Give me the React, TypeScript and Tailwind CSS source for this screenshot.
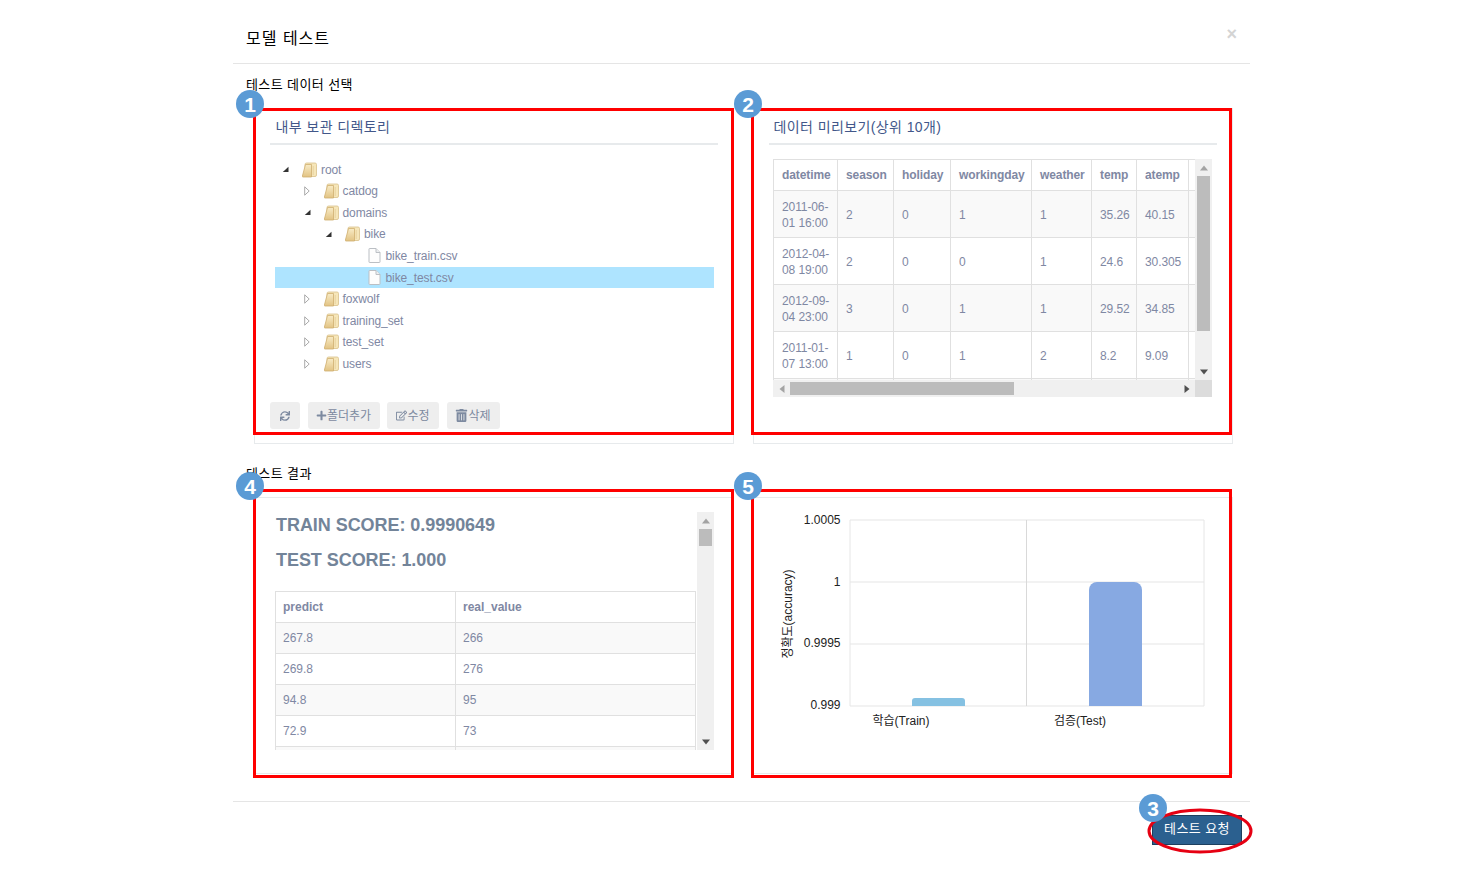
import { FaPlus, FaRegEdit, FaSync, FaTrashAlt } from 'react-icons/fa';

const FONT = "font-['Liberation_Sans','Noto_Sans_CJK_KR',sans-serif]";

const treeRows = [
  { name: 'root', depth: 0, open: true, kind: 'folder' },
  { name: 'catdog', depth: 1, open: false, kind: 'folder' },
  { name: 'domains', depth: 1, open: true, kind: 'folder' },
  { name: 'bike', depth: 2, open: true, kind: 'folder' },
  { name: 'bike_train.csv', depth: 3, kind: 'file' },
  { name: 'bike_test.csv', depth: 3, kind: 'file', selected: true },
  { name: 'foxwolf', depth: 1, open: false, kind: 'folder' },
  { name: 'training_set', depth: 1, open: false, kind: 'folder' },
  { name: 'test_set', depth: 1, open: false, kind: 'folder' },
  { name: 'users', depth: 1, open: false, kind: 'folder' },
];

const previewCols = [
  ['datetime', 'w-[64px]'],
  ['season', 'w-[56px]'],
  ['holiday', 'w-[57px]'],
  ['workingday', 'w-[81px]'],
  ['weather', 'w-[60px]'],
  ['temp', 'w-[45px]'],
  ['atemp', 'w-[52px]'],
  ['', 'w-[40px]'],
];

const previewRows = [
  ['2011-06-\n01 16:00', '2', '0', '1', '1', '35.26', '40.15', ''],
  ['2012-04-\n08 19:00', '2', '0', '0', '1', '24.6', '30.305', ''],
  ['2012-09-\n04 23:00', '3', '0', '1', '1', '29.52', '34.85', ''],
  ['2011-01-\n07 13:00', '1', '0', '1', '2', '8.2', '9.09', ''],
  ['', '', '', '', '', '', '', ''],
];

const resultRows = [
  ['267.8', '266'],
  ['269.8', '276'],
  ['94.8', '95'],
  ['72.9', '73'],
  ['', ''],
];

function FolderIcon() {
  return (
    <svg width="15" height="16" viewBox="0 0 15 16" className="shrink-0">
      <defs>
        <linearGradient id="fold" x1="0" y1="0" x2="0" y2="1">
          <stop offset="0" stopColor="#f8ebc6" />
          <stop offset="1" stopColor="#e2c383" />
        </linearGradient>
      </defs>
      <rect x="3" y="1" width="11.5" height="13.5" rx="1.5" fill="#f6e6b9" stroke="#d9c08a" strokeWidth="0.8" />
      <path d="M3.5 2.5H9.5V15H1a.7.7 0 0 1-.6-1z" fill="url(#fold)" stroke="#cfae70" strokeWidth="0.8" />
      <path d="M11.2 4v9" stroke="#e8d3a0" />
    </svg>
  );
}

function FileIcon() {
  return (
    <svg width="15" height="15" viewBox="0 0 15 15" className="shrink-0">
      <path d="M2.5.5h6.5l4 4v9.5a.5.5 0 0 1-.5.5h-10a.5.5 0 0 1-.5-.5V1a.5.5 0 0 1 .5-.5z" fill="#fdfdfd" stroke="#bbbfc4" />
      <path d="M9 .5v4h4" fill="#eceef0" stroke="#bbbfc4" />
    </svg>
  );
}

function Toggle({ open }: { open?: boolean }) {
  if (open) {
    return (
      <svg width="7" height="7" viewBox="0 0 7 7">
        <path d="M6.5.8V6H.8z" fill="#333" />
      </svg>
    );
  }
  return (
    <svg width="6" height="10" viewBox="0 0 6 10">
      <path d="M.7.8 5.2 5 .7 9.2z" fill="#fff" stroke="#aaa" />
    </svg>
  );
}

function Badge({ n, className }: { n: number; className: string }) {
  return (
    <div className={`absolute z-20 flex h-[28px] w-[28px] items-center justify-center rounded-full bg-[#5b9bd5] text-[21px] leading-none font-bold text-white ${className}`}>
      {n}
    </div>
  );
}

function Arrow({ dir }: { dir: 'up' | 'down' | 'left' | 'right' }) {
  const d = { up: 'M0 5 4 0 8 5z', down: 'M0 0 8 0 4 5z', left: 'M5 0V8L0 4z', right: 'M0 0V8L5 4z' }[dir];
  const dark = dir === 'down' || dir === 'right';
  return (
    <svg width="8" height="8" viewBox="0 0 8 8" className="block">
      <path d={d} fill={dark ? '#505050' : '#a3a3a3'} transform={dir === 'left' || dir === 'right' ? 'translate(1.5 0)' : 'translate(0 1.5)'} />
    </svg>
  );
}

function VScroll({ thumb }: { thumb: string }) {
  return (
    <div className="flex h-full w-[17px] shrink-0 flex-col items-center bg-[#f0f0f0]">
      <div className="flex h-[17px] items-center justify-center"><Arrow dir="up" /></div>
      <div className={`w-[13px] bg-[#bcbcbc] ${thumb}`} />
      <div className="mt-auto flex h-[17px] items-center justify-center"><Arrow dir="down" /></div>
    </div>
  );
}

function ToolButton({ children, className }: { children: React.ReactNode; className: string }) {
  return (
    <button className={`flex h-[27px] items-center justify-center rounded-[3px] bg-[#eeeeee] text-[12px] text-[#7d8aa0] ${className}`}>
      {children}
    </button>
  );
}

function PanelTitle({ children }: { children: React.ReactNode }) {
  return (
    <div className="h-[36px] border-b-2 border-[#e7eaec] pt-[8px] pl-[5.5px] text-[14px] leading-[20px] font-normal tracking-[0.4px] text-[#42578a]">
      {children}
    </div>
  );
}

function DirectoryPanel() {
  return (
    <div className="relative flex h-[336px] flex-col border border-[#e7eaec] px-[15px] pb-[14px]">
      <Badge n={1} className="top-[-19px] left-[-19px]" />
      <div className="absolute top-[-1px] right-[-1px] bottom-[8px] left-[-2px] z-10 border-[3.5px] border-[#ff0000]" />
      <PanelTitle>내부 보관 디렉토리</PanelTitle>
      <div className="mt-[14px] mr-[4px] ml-[5px]">
        {treeRows.map((row) => (
          <div key={row.name} className={`flex h-[21.55px] items-center ${row.selected ? 'bg-[#aee4ff]' : ''}`}>
            <div className="flex items-center" style={{ marginLeft: row.depth * 21.5 }}>
              <div className="flex w-[27px] justify-start pl-[7px]">
                {row.kind === 'folder' && <Toggle open={row.open} />}
              </div>
              {row.kind === 'folder' ? <FolderIcon /> : <FileIcon />}
              <span className="ml-[4px] text-[12px] tracking-[-0.1px] text-[#7f88a3]">{row.name}</span>
            </div>
          </div>
        ))}
      </div>
      <div className="mt-auto flex gap-[7.5px]">
        <ToolButton className="w-[30px]"><FaSync className="text-[10px]" /></ToolButton>
        <ToolButton className="w-[72px]"><FaPlus className="text-[11px]" />폴더추가</ToolButton>
        <ToolButton className="w-[52px]"><FaRegEdit className="text-[11px]" />수정</ToolButton>
        <ToolButton className="w-[53px]"><FaTrashAlt className="text-[13px]" />삭제</ToolButton>
      </div>
    </div>
  );
}

function PreviewPanel() {
  return (
    <div className="relative flex h-[336px] flex-col border border-[#e7eaec] px-[15px]">
      <Badge n={2} className="top-[-19px] left-[-20px]" />
      <div className="absolute top-[-1px] right-0 bottom-[8px] left-[-3px] z-10 border-[3.5px] border-[#ff0000]" />
      <PanelTitle>
        <span className="ml-[-1px]">데이터 미리보기(상위 10개)</span>
      </PanelTitle>
      <div className="mt-[14px] mr-[5px] ml-[4px] h-[238px]">
        <div className="flex h-[221px]">
          <div className="h-full flex-1 overflow-hidden">
            <table className="w-[455px] table-fixed border-collapse border border-[#e0e0e0] text-[12px] text-[#7f88a3]">
              <colgroup>
                {previewCols.map(([name, width], i) => (
                  <col key={i} className={width} />
                ))}
              </colgroup>
              <thead>
                <tr className="h-[31px]">
                  {previewCols.map(([name], i) => (
                    <th key={i} className="border border-[#e0e0e0] px-[8px] text-left font-bold tracking-[-0.1px] whitespace-nowrap">{name}</th>
                  ))}
                </tr>
              </thead>
              <tbody>
                {previewRows.map((row, r) => (
                  <tr key={r} className={`h-[47px] ${r % 2 === 0 ? 'bg-[#f9f9f9]' : 'bg-white'}`}>
                    {row.map((cell, c) => (
                      <td key={c} className="border border-[#e0e0e0] px-[8px] pt-[1px] leading-[16px] tracking-[-0.1px] whitespace-pre">{cell}</td>
                    ))}
                  </tr>
                ))}
              </tbody>
            </table>
          </div>
          <VScroll thumb="h-[155px]" />
        </div>
        <div className="flex h-[17px] items-center bg-[#f0f0f0]">
          <div className="flex w-[17px] justify-center"><Arrow dir="left" /></div>
          <div className="h-[13px] w-[224px] bg-[#bcbcbc]" />
          <div className="ml-auto flex w-[17px] justify-center"><Arrow dir="right" /></div>
          <div className="h-full w-[17px] bg-[#dcdcdc]" />
        </div>
      </div>
    </div>
  );
}

function ResultPanel() {
  return (
    <div className="relative h-[277px] border border-[#e7eaec] pt-[14px] pr-[19px] pl-[20px]">
      <Badge n={4} className="top-[-26px] left-[-19px]" />
      <div className="absolute top-[-9px] right-[-1px] bottom-[-5px] left-[-2px] z-10 border-[3.5px] border-[#ff0000]" />
      <div className="flex h-[238px]">
        <div className="flex-1 overflow-hidden">
          <div className="pt-[3px] pl-[1px] text-[18px] leading-[20px] font-bold tracking-[-0.05px] text-[#738499]">TRAIN SCORE: 0.9990649</div>
          <div className="mt-[15px] pl-[1px] text-[18px] leading-[20px] font-bold tracking-[-0.05px] text-[#738499]">TEST SCORE: 1.000</div>
          <table className="mt-[21px] w-[421px] table-fixed border-collapse border border-[#e0e0e0] text-[12px] text-[#7f88a3]">
            <colgroup>
              <col className="w-[180px]" />
              <col />
            </colgroup>
            <thead>
              <tr className="h-[31px]">
                <th className="border border-[#e0e0e0] px-[7px] text-left font-bold">predict</th>
                <th className="border border-[#e0e0e0] px-[7px] text-left font-bold">real_value</th>
              </tr>
            </thead>
            <tbody>
              {resultRows.map((row, r) => (
                <tr key={r} className={`h-[31px] ${r % 2 === 0 ? 'bg-[#f9f9f9]' : 'bg-white'}`}>
                  {row.map((cell, c) => (
                    <td key={c} className="border border-[#e0e0e0] px-[7px]">{cell}</td>
                  ))}
                </tr>
              ))}
            </tbody>
          </table>
        </div>
        <VScroll thumb="h-[17px]" />
      </div>
    </div>
  );
}

function ChartPanel() {
  const grid = '#e6e6e6';
  return (
    <div className="relative h-[277px] border border-[#e7eaec]">
      <Badge n={5} className="top-[-26px] left-[-20px]" />
      <div className="absolute top-[-9px] right-0 bottom-[-5px] left-[-3px] z-10 border-[3.5px] border-[#ff0000]" />
      <svg viewBox="754 498 478 275" className="block h-[275px] w-[478px]" fontFamily="'Liberation Sans','Noto Sans CJK KR',sans-serif" fontSize="12" fill="#222">
        {[520, 582, 644, 706].map((y) => (
          <line key={y} x1="850" x2="1204" y1={y} y2={y} stroke={grid} strokeWidth="1.2" />
        ))}
        <line x1="850" x2="850" y1="520" y2="706" stroke={grid} />
        <line x1="1026.5" x2="1026.5" y1="520" y2="706" stroke="#d9d9d9" />
        <line x1="1204" x2="1204" y1="520" y2="706" stroke={grid} />
        <path d="M912 706V701a3 3 0 0 1 3-3H962a3 3 0 0 1 3 3v5z" fill="#85c1e2" />
        <path d="M1089 706V590a8 8 0 0 1 8-8H1134a8 8 0 0 1 8 8V706z" fill="#87a9e2" />
        <text x="840.5" y="524" textAnchor="end">1.0005</text>
        <text x="840.5" y="586" textAnchor="end">1</text>
        <text x="840.5" y="647" textAnchor="end">0.9995</text>
        <text x="840.5" y="709" textAnchor="end">0.999</text>
        <text x="901" y="725" textAnchor="middle">학습(Train)</text>
        <text x="1080" y="725" textAnchor="middle">검증(Test)</text>
        <text x="792" y="614" textAnchor="middle" transform="rotate(-90 792 614)">정확도(accuracy)</text>
      </svg>
    </div>
  );
}

export default function App() {
  return (
    <div className={`min-h-[884px] bg-white ${FONT}`}>
      <div className="ml-[233px] w-[1017px]">
        <div className="flex h-[64px] items-start justify-between border-b border-[#e5e5e5] pt-[29px] pr-[13px] pl-[13px]">
          <h4 className="text-[16px] leading-[20px] font-normal tracking-[1px] text-black">모델 테스트</h4>
          <span className="mt-[-5px] text-[18px] leading-[20px] font-bold text-[#d4d4d4]">×</span>
        </div>

        <div className="px-[13px] pt-[11px]">
          <div className="h-[20px] text-[13px] leading-[20px] tracking-[0.4px] text-black">테스트 데이터 선택</div>
        </div>
        <div className="mt-[13px] ml-[21px] grid w-[979px] grid-cols-[480px_480px] gap-x-[19px]">
          <DirectoryPanel />
          <PreviewPanel />
        </div>

        <div className="mt-[20px] h-[20px] px-[13px] text-[13px] leading-[20px] tracking-[0.4px] text-black">테스트 결과</div>
        <div className="mt-[13px] ml-[21px] grid w-[979px] grid-cols-[480px_480px] gap-x-[19px]">
          <ResultPanel />
          <ChartPanel />
        </div>

        <div className="relative mt-[27px] flex h-[70px] justify-end border-t border-[#e5e5e5] pt-[13px] pr-[8px]">
          <button className="h-[30px] w-[90px] border border-[#1d3f5e] bg-[#2b608f] pb-[2px] text-[13px] tracking-[0.4px] text-white">테스트 요청</button>
          <Badge n={3} className="top-[-8px] right-[83px]" />
          <svg width="106" height="46" viewBox="0 0 106 46" className="absolute top-[6px] right-[-3px] z-10" fill="none">
            <ellipse cx="53" cy="23" rx="51" ry="21" stroke="#e60012" strokeWidth="3" />
          </svg>
        </div>
      </div>
    </div>
  );
}
